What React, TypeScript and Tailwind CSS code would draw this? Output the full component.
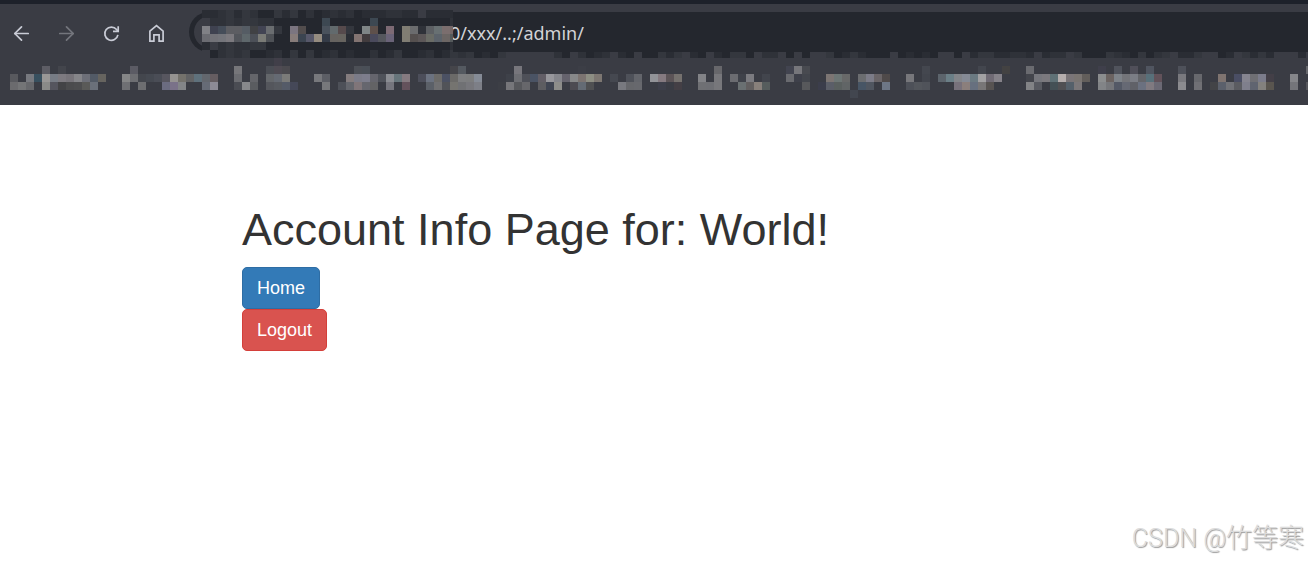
import { ArrowLeft, ArrowRight } from 'lucide-react'

type Run = { x: number; y: number; cells: string }

const CELL = 8

// one letter per cell, a = field colour, e = toolbar colour
const SHADES: Record<string, string> = {
  a: '24272e',
  b: '2a2d34',
  c: '2f3239',
  d: '34373e',
  e: '3a3c44',
}

// "-" leaves a cell empty
const addressRuns: Run[] = [
  { x: 0, y: 0, cells: 'b b c d b d c a a d b d a c a b c b c a b b b c c b b e b b b b' },
  { x: 0, y: 8, cells: 'e c c d c d d c c a a a a a a 3d4852 a a a a a 3d4852 a a a a a a a a a c' },
  { x: 0, y: 16, cells: '808186 3f4250 454d59 5c5d62 5c5d62 555c64 404144 424453 6a6d70 d a 7b7580 524d4d a a 4a525c 626a6d 564a4c d a 7f8586 5e504b a 7d6a74 a 807d73 6b6c6e c 5c5f63 687072 7b6e6e 756767' },
  { x: 0, y: 24, cells: '6b6c72 727278 74757b 7c7a7f 53565c 5e676b 4c5058 7a7b76 4e5156 a a 877c7a 3b4450 57586a 958c80 343b47 666360 67645f b 837472 423c3e 4a4a5c 55575d 6a6378 a 807d73 55504f 5c5758 6a6c66 5c636b 6c6664 555a5c' },
  { x: 0, y: 32, cells: 'b e c d c c d d a a a a a a a a a a a a a a a a a a a a a a a c' },
  { x: 0, y: 40, cells: 'e a c d c d a a b c a d a d a b c a b a a c a b d a a b c a b d' },
]

const fieldEdgeRuns: Run[] = [
  {
    x: 0,
    y: 0,
    cells:
      'd c d a b a d e e e e e e c a e c a b c e b a e a a d b d e b a e b a d d a e c c e a e a e e d a b d b a a a e a b a b a e e a e b d d b b c c b e b c c e d a a a d c b a d a c d e b b d e e a b e d b d b e e e b',
  },
]

const bookmarkRuns: Run[] = [
  { x: 274, y: 0, cells: '413f49' },
  { x: 42, y: 8, cells: '5d5d65 - 43454c' },
  { x: 130, y: 8, cells: '5b5b64' },
  { x: 234, y: 8, cells: '76767a - - - 4a4d54 4f4b53 4b4a4f' },
  { x: 354, y: 8, cells: '4c4f56 4a4f57' },
  { x: 450, y: 8, cells: '45454a 545960' },
  { x: 514, y: 8, cells: '77767c' },
  { x: 578, y: 8, cells: '3c3e46' },
  { x: 714, y: 8, cells: '67676b' },
  { x: 786, y: 8, cells: '424450 76767b 484a50' },
  { x: 922, y: 8, cells: '44474f' },
  { x: 978, y: 8, cells: '43464e - - 434242 - - 6a6b70' },
  { x: 1098, y: 8, cells: '3f3f4b - 50535c - 504f59 - 505560 - - - 4e515a' },
  { x: 1306, y: 8, cells: '66676c' },
  { x: 10, y: 16, cells: '58595e - 77797f 38505f 999796 777c85 7d7a80 77747a 858589 6d6f78 525a66 66645f' },
  { x: 122, y: 16, cells: '858687 6d6e72 43464d 454951 4a4d56 57565f 959391 74726c 626365 5f717c 63676e 655d61' },
  { x: 234, y: 16, cells: '6b6c71 - 64656a - 63666a 656a73 7b7b79 - - - 77787c 5c5e65' },
  { x: 346, y: 16, cells: '847c7e 7b7b88 7d7d8c 65656d 4f525a 8b8d93 67757b 857a80 - 4c4e5a 6b7280 6c6b69 4b5163 6b6a68 7d7e80 7c7d7e 858b96' },
  { x: 506, y: 16, cells: '3e4149 6d6e73 4e5058 4a5364 625e66 97979c 85868c 65636d 878889 7c7471 8d8e83 7d7772 - 454850 - 4e5159 63656b - 929398 857a80 5c5457 75716e' },
  { x: 698, y: 16, cells: '828387 - 77777b - 6b6c71 3f424a 7b7b80 - 42454d' },
  { x: 786, y: 16, cells: '696a6f 3e404a 43464d - - 7c7573 6d7675 686969 - 6b6d70 7c7c88 6a6568 4f4a4a' },
  { x: 906, y: 16, cells: '77777b - 42454d - 5c646c 6b7f87 83858a 858a95 6b7a82 a2a1a3 706b75 858289' },
  { x: 1026, y: 16, cells: '43454c 76777d 7b797e 5f7176 b5aead 7a7578 7a7572 625e5b - 8b8d8e 6b6361 7e8389 74757a 7b7d85 64656a 58707a 62525a' },
  { x: 1178, y: 16, cells: '79797e - 67686d - - 7f7470 - 4a4e64 85848f 6f6f74 7b7c8b 433f47 - - 85868a' },
  { x: 10, y: 24, cells: '6b6b6e 747577 67686c - 8a8a88 55555e 434346 4b4b4d 4d4d4f 5a5a58 6a707a' },
  { x: 122, y: 24, cells: '6f7074 - 6d6e71 - - 6b6c80 7a7289 838588 - - 666b76 8d8b96' },
  { x: 234, y: 24, cells: '4a4c53 87888b 5a5c60 - 54565c 575a60 555b68 454858 - - - 77787b' },
  { x: 338, y: 24, cells: '4d5058 64666d 807579 66666e 636365 - 75757d - 64525c - - 5b6068 707072 515358 757470 707174 77777c 7d7f87' },
  { x: 498, y: 24, cells: '3c3e45 76767a 57585c 67676b - 5d5d61 404552 8d8d8a - 4d4b52 646b74 4f5052' },
  { x: 618, y: 24, cells: '78797f 66676b 67686d - - 3d3f4a - 443f45' },
  { x: 698, y: 24, cells: '6f7074 6e6f74 77777b - - 6a7072 625f60 88807b 565d5d' },
  { x: 802, y: 24, cells: '57585b - 3b3d4b 5b5e68 5a605f 616566 - 475565 505660 - 6d7685' },
  { x: 906, y: 24, cells: '4d5058 53565c 50535a - - - 77717b 8b7f7c 67707f 787677 575352' },
  { x: 1026, y: 24, cells: '828386 585a61 - 445055 505053 55606a 7b7779 - - 828487 75767a 545966 666974 606168 6b7180 807a80 6b6974' },
  { x: 1178, y: 24, cells: '8b8b8f - 707075 - 434447 5b606b 717277 5b5c61 7f7f8c 606470 83817e 59554f - - 74757a - 55565b' },
  { x: 850, y: 32, cells: '42464f' },
]

function Mosaic({ runs, className }: { runs: Run[]; className: string }) {
  return (
    <svg className={className} shapeRendering="crispEdges" aria-hidden="true">
      {runs.map((run) =>
        run.cells.split(' ').map((cell, i) =>
          cell === '-' ? null : (
            <rect
              key={`${run.x}-${run.y}-${i}`}
              x={run.x + i * CELL}
              y={run.y}
              width={CELL}
              height={CELL}
              fill={`#${SHADES[cell] ?? cell}`}
            />
          )
        )
      )}
    </svg>
  )
}

function ReloadIcon() {
  return (
    <svg width="17" height="17" viewBox="0 0 17 17" fill="none" stroke="currentColor" strokeWidth="1.7">
      <path d="M14.9 9.8A6.6 6.6 0 1 1 13.6 4.6L15 6" />
      <path d="M15.2 1.2v5.2H10" />
    </svg>
  )
}

function HomeIcon() {
  return (
    <svg width="17" height="19" viewBox="0 0 17 19" fill="none" stroke="currentColor" strokeWidth="1.7">
      <path d="M1.9 7.2 8.5 1.6l6.6 5.6v10h-4v-6.4H5.9v6.4h-4z" />
    </svg>
  )
}

function NavButton({ label, disabled, children }: { label: string; disabled?: boolean; children: React.ReactNode }) {
  return (
    <button
      type="button"
      aria-label={label}
      disabled={disabled}
      className="flex h-10 w-[45px] shrink-0 items-center justify-center pt-[2px] pr-[2px] text-[#c9ccd6] disabled:text-[#74767d]"
    >
      {children}
    </button>
  )
}

function BrowserBar() {
  return (
    <header className="overflow-hidden border-t-4 border-[#1d212a] bg-[#3a3c44]">
      <div className="flex pt-2">
        <NavButton label="Back">
          <ArrowLeft size={23} strokeWidth={1.8} />
        </NavButton>
        <NavButton label="Forward" disabled>
          <ArrowRight size={23} strokeWidth={1.8} />
        </NavButton>
        <NavButton label="Reload">
          <ReloadIcon />
        </NavButton>
        <NavButton label="Home">
          <HomeIcon />
        </NavButton>
        <div className="relative ml-[9px] h-10 min-w-0 flex-1 rounded-l-full bg-[#24272e]">
          <div className="absolute top-1 left-[5px] h-8 w-8 rounded-full bg-[#3a3c44]" />
          <input
            type="text"
            aria-label="Address"
            defaultValue="0/xxx/..;/admin/"
            className="relative h-10 w-full bg-transparent pt-[2px] pl-[261px] font-['Noto_Sans','Open_Sans',sans-serif] text-[18px] text-[#d2d3d7] outline-none"
          />
          <Mosaic runs={addressRuns} className="pointer-events-none absolute -top-[2px] left-[13px] h-12 w-[251px]" />
        </div>
      </div>
      <div className="pl-[450px]">
        <Mosaic runs={fieldEdgeRuns} className="block h-[6px] w-full" />
      </div>
      <Mosaic runs={bookmarkRuns} className="block h-[47px] w-full" />
    </header>
  )
}

export default function App() {
  return (
    <div className="relative flex min-h-screen flex-col bg-white font-['Liberation_Sans',Arial,sans-serif]">
      <BrowserBar />
      <main className="mx-auto w-full max-w-[824px] pt-[100px]">
        <h1 className="mb-3 text-[45px] leading-[50px] text-[#333333]">Account Info Page for: World!</h1>
        <div className="flex flex-col items-start text-[18px] leading-[24px] text-white">
          <a href="#home" className="rounded-[5px] border border-[#2e6da4] bg-[#337ab7] px-[14px] py-2">
            Home
          </a>
          <a href="#logout" className="rounded-[5px] border border-[#d43f3a] bg-[#d9534f] px-[14px] py-2">
            Logout
          </a>
        </div>
      </main>
      <p className="absolute right-1 bottom-1 font-['Noto_Sans_CJK_SC',sans-serif] text-[26px] leading-[36px] font-light text-[#dcdcdc] [text-shadow:1px_1px_1px_#999999]">
        <span className="font-['Roboto',sans-serif] text-[25px]">CSDN @</span>竹等寒
      </p>
    </div>
  )
}
